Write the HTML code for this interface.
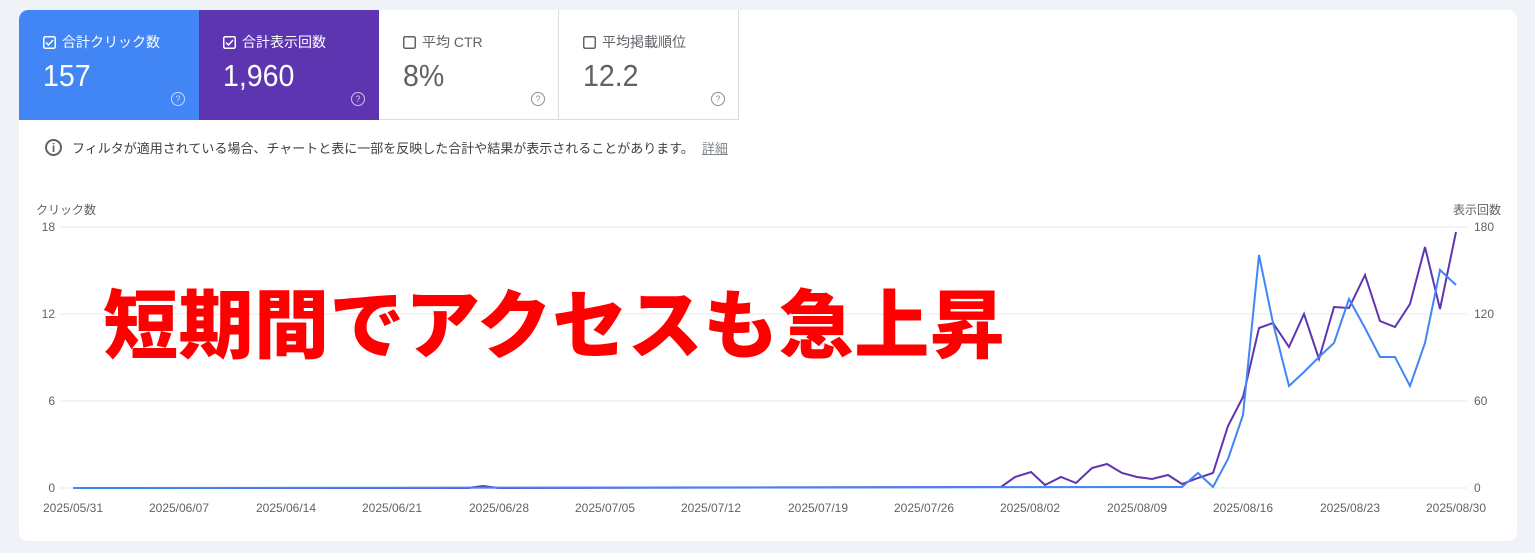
<!DOCTYPE html>
<html><head><meta charset="utf-8"><style>
body{margin:0;width:1535px;height:553px;background:#eff3f8;font-family:"Liberation Sans","Noto Sans CJK JP",sans-serif;position:relative;overflow:hidden}
.card{position:absolute;left:19px;top:10px;width:1498px;height:531px;background:#fff;border-radius:9px;overflow:hidden}
.tile{position:absolute;top:0;height:110px;width:180px;box-sizing:border-box}
.t1{left:0;background:#4285f4;color:#fff;border-top-left-radius:9px}
.t2{left:180px;background:#5e35b1;color:#fff}
.t3{left:360px;background:#fff;color:#5f6368;border-right:1px solid #dadce0;border-bottom:1px solid #dadce0}
.t4{left:540px;background:#fff;color:#5f6368;border-right:1px solid #dadce0;border-bottom:1px solid #dadce0}
.lab{position:absolute;left:24px;top:22px;font-size:14px;display:flex;align-items:center;gap:6px}
.val{position:absolute;left:24px;top:48px;font-size:31px;transform:scaleX(.92);transform-origin:left}
.q{position:absolute;left:152px;top:82px;width:12px;height:12px;border:1.3px solid currentColor;border-radius:50%;font-size:9px;text-align:center;line-height:12px;opacity:.7}
.info{position:absolute;left:26px;top:128px;font-size:13px;color:#3c4043;display:flex;align-items:center;gap:10px}
.ic{width:17px;height:17px;border:2px solid #5f6368;border-radius:50%;box-sizing:border-box;text-align:center;font-size:12px;line-height:14px;font-weight:bold;color:#5f6368}
.big{position:absolute;left:103px;top:270px;font-size:75px;font-weight:900;color:#ff0000;font-family:"Noto Sans CJK JP",sans-serif;white-space:nowrap;line-height:100px;letter-spacing:0.5px}
</style></head><body>
<div class="card">
<div class="tile t1"><div class="lab"><svg width="13" height="13" viewBox="0 0 13 13"><rect x="0.75" y="0.75" width="11.5" height="11.5" rx="1.5" fill="none" stroke="#fff" stroke-width="1.5"/><path d="M3 6.5l2.5 2.5L10 4" fill="none" stroke="#fff" stroke-width="1.5"/></svg>合計クリック数</div><div class="val">157</div><div class="q">?</div></div>
<div class="tile t2"><div class="lab"><svg width="13" height="13" viewBox="0 0 13 13"><rect x="0.75" y="0.75" width="11.5" height="11.5" rx="1.5" fill="none" stroke="#fff" stroke-width="1.5"/><path d="M3 6.5l2.5 2.5L10 4" fill="none" stroke="#fff" stroke-width="1.5"/></svg>合計表示回数</div><div class="val">1,960</div><div class="q">?</div></div>
<div class="tile t3"><div class="lab"><svg width="13" height="13" viewBox="0 0 13 13"><rect x="0.75" y="0.75" width="11.5" height="11.5" rx="1.5" fill="none" stroke="#5f6368" stroke-width="1.5"/></svg>平均 CTR</div><div class="val">8%</div><div class="q">?</div></div>
<div class="tile t4"><div class="lab"><svg width="13" height="13" viewBox="0 0 13 13"><rect x="0.75" y="0.75" width="11.5" height="11.5" rx="1.5" fill="none" stroke="#5f6368" stroke-width="1.5"/></svg>平均掲載順位</div><div class="val">12.2</div><div class="q">?</div></div>
<div class="info"><div class="ic">i</div>フィルタが適用されている場合、チャートと表に一部を反映した合計や結果が表示されることがあります。<span style="color:#80868b;text-decoration:underline;margin-left:-2px">詳細</span></div>
</div>
<svg style="position:absolute;left:0;top:0" width="1535" height="553">
<g stroke="#e8eaed" stroke-width="1"><line x1="60" x2="1467" y1="227" y2="227"/><line x1="60" x2="1467" y1="314" y2="314"/><line x1="60" x2="1467" y1="401" y2="401"/><line x1="60" x2="1467" y1="488" y2="488"/></g>
<g font-family="Liberation Sans,Noto Sans CJK JP,sans-serif" font-size="12" fill="#5f6368">
<text x="36" y="214">クリック数</text><text x="1453" y="214">表示回数</text>
<g text-anchor="end"><text x="55" y="231">18</text><text x="55" y="318">12</text><text x="55" y="405">6</text><text x="55" y="492">0</text></g>
<text x="1474" y="231">180</text><text x="1474" y="318">120</text><text x="1474" y="405">60</text><text x="1474" y="492">0</text>
<g text-anchor="middle"><text x="73" y="512">2025/05/31</text><text x="179" y="512">2025/06/07</text><text x="286" y="512">2025/06/14</text><text x="392" y="512">2025/06/21</text><text x="499" y="512">2025/06/28</text><text x="605" y="512">2025/07/05</text><text x="711" y="512">2025/07/12</text><text x="818" y="512">2025/07/19</text><text x="924" y="512">2025/07/26</text><text x="1030" y="512">2025/08/02</text><text x="1137" y="512">2025/08/09</text><text x="1243" y="512">2025/08/16</text><text x="1350" y="512">2025/08/23</text><text x="1456" y="512">2025/08/30</text></g>
</g>
<polyline fill="none" stroke="#5e35b1" stroke-width="2" points="73,488 468,488 483,486 498,488 1001,487 1015,477 1031,472 1045,485 1061,477 1076,483 1092,468 1107,464 1122,473 1137,477 1152,479 1168,475 1182,484 1198,478 1213,473 1228,426 1243,397 1259,328 1273,323 1289,347 1304,314 1319,359 1334,307 1349,308 1365,275 1380,321 1395,327 1410,304 1425,247 1440,309 1456,232"/>
<polyline fill="none" stroke="#4285f4" stroke-width="2" points="73,488 1182,487 1198,473 1213,487 1228,459 1243,415 1259,255 1273,323 1289,386 1304,372 1319,357 1334,343 1349,299 1365,328 1380,357 1395,357 1410,386 1425,343 1440,270 1456,285"/>
</svg>
<div class="big">短期間でアクセスも急上昇</div>
</body></html>
